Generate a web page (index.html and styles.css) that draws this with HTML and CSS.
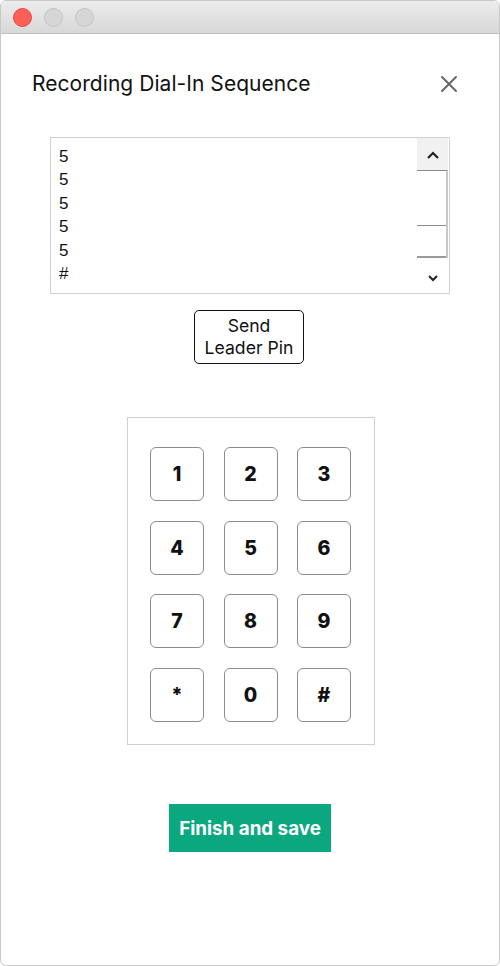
FILE: index.html
```html
<!DOCTYPE html>
<html>
<head>
<meta charset="utf-8">
<link rel="stylesheet" href="styles.css">
</head>
<body>
<div class="window">
  <div class="titlebar">
    <span class="light red"></span>
    <span class="light"></span>
    <span class="light"></span>
  </div>
  <div class="content">
    <div class="header">
      <h1 class="title">Recording Dial-In Sequence</h1>
      <svg class="close" width="18" height="18" viewBox="0 0 18 18"><path d="M2 2 L16 16 M16 2 L2 16" stroke="#666" stroke-width="2" stroke-linecap="round"/></svg>
    </div>
    <div class="seq">
      <div class="seq-text">
        <div class="seq-lines">
          <div>5</div><div>5</div><div>5</div><div>5</div><div>5</div><div>5</div><div>#</div>
        </div>
      </div>
      <div class="sbar">
        <div class="sbtn up"><svg width="14" height="9" viewBox="0 0 14 9"><path d="M2 7 L7 2 L12 7" fill="none" stroke="#222" stroke-width="2.2"/></svg></div>
        <div class="strack"><div class="sgap"></div><div class="sthumb"></div></div>
        <div class="sbtn down"><svg width="12" height="8" viewBox="0 0 12 8"><path d="M2 2 L6 6 L10 2" fill="none" stroke="#222" stroke-width="2"/></svg></div>
      </div>
    </div>
    <button class="leader">Send<br>Leader Pin</button>
    <div class="keypad">
      <button class="key">1</button><button class="key">2</button><button class="key">3</button>
      <button class="key">4</button><button class="key">5</button><button class="key">6</button>
      <button class="key">7</button><button class="key">8</button><button class="key">9</button>
      <button class="key">*</button><button class="key">0</button><button class="key">#</button>
    </div>
    <button class="finish">Finish and save</button>
  </div>
</div>
</body>
</html>
```

FILE: styles.css
```css
* { box-sizing: border-box; }
html, body { margin: 0; padding: 0; background: #fff; }
body { width: 500px; height: 966px; overflow: hidden; font-family: Inter, "Liberation Sans", sans-serif; color: #111; }
.window {
  width: 500px; height: 966px;
  border: 1px solid #c8c8c8; border-radius: 6px;
  overflow: hidden; background: #fff;
  display: flex; flex-direction: column;
}
.titlebar {
  height: 33px; flex: none;
  background: linear-gradient(#ececec, #d8d8d8);
  border-bottom: 1px solid #bdbdbd;
  display: flex; align-items: center; gap: 12px;
  padding-left: 12px;
}
.light { width: 19px; height: 19px; border-radius: 50%; background: #d6d6d6; border: 1px solid #c4c4c4; }
.light.red { background: #fe5f57; border-color: #e5473f; }
.content { display: flex; flex-direction: column; align-items: center; padding-top: 38px; }
.header { width: 100%; display: flex; justify-content: space-between; align-items: center; padding: 0 41px 0 31px; }
.title { margin: 0; font-size: 21px; font-weight: 400; line-height: 24px; letter-spacing: 0.05px; color: #111; }
.close { display: block; }
.seq {
  margin-top: 41px; width: 400px; height: 157px;
  border: 1px solid #d0d0d0; display: flex;
}
.seq-text { flex: 1; overflow: hidden; padding-left: 8px; }
.seq-lines { margin-top: -17px; font-family: "Liberation Sans", Arial, sans-serif; font-size: 17px; line-height: 23.5px; color: #111; }
.sbar { width: 31px; display: flex; flex-direction: column; margin-right: 1px; }
.sbtn { display: flex; align-items: center; justify-content: center; }
.sbtn.up { height: 32px; background: #f1f1f1; padding-top: 2px; }
.sbtn.down { flex: 1; padding-top: 4px; }
.strack { height: 88px; border-top: 1px solid #8a8a8a; border-right: 2px solid #c8c8c8; display: flex; flex-direction: column; }
.sgap { height: 54px; }
.sthumb { flex: 1; border-top: 1px solid #8a8a8a; border-bottom: 2px solid #9a9a9a; }
.leader {
  margin-top: 16px; margin-right: 2px; width: 110px; height: 54px;
  border: 1px solid #111; border-radius: 5px; background: #fff;
  font-family: Inter, "Liberation Sans", sans-serif; font-size: 17.6px; line-height: 22px; color: #111; padding: 0;
}
.keypad {
  margin-top: 53px; margin-left: 2px; width: 248px; height: 328px;
  border: 1px solid #d0d0d0;
  padding: 29px 22px 22px 22px;
  display: grid; grid-template-columns: repeat(3, 54px); grid-auto-rows: 54px;
  column-gap: 19.5px; row-gap: 19.5px;
}
.key {
  border: 1px solid #8c8c8c; border-radius: 6px; background: #fff;
  font-family: Inter, "Liberation Sans", sans-serif; font-size: 19.5px; font-weight: 800; color: #111; padding: 0;
}
.finish {
  margin-top: 59px; width: 162px; height: 48px;
  background: #0ba87f; border: none; color: #fff;
  font-family: Inter, "Liberation Sans", sans-serif; font-size: 18.8px; font-weight: 700; padding: 0;
}
```
